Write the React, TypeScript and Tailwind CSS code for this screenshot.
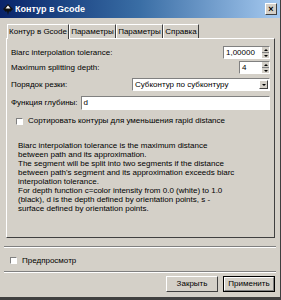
import React from "react";

const font = { fontFamily: '"Liberation Sans", Arial, sans-serif' };

function Spin({ value, w }: { value: string; w: string }) {
  return (
    <div className={`flex h-[13px] ${w} border border-t-[#808080] border-l-[#808080] border-b-white border-r-white bg-white`}>
      <div className="flex-1 pl-[2px] text-[8px] leading-[11px] text-black">{value}</div>
      <div className="flex w-[7px] flex-col bg-[#d4d0c8]">
        <div className="flex flex-1 items-center justify-center border-b border-[#808080]">
          <div className="h-0 w-0 border-x-[2px] border-b-[2px] border-x-transparent border-b-black" />
        </div>
        <div className="flex flex-1 items-center justify-center">
          <div className="h-0 w-0 border-x-[2px] border-t-[2px] border-x-transparent border-t-black" />
        </div>
      </div>
    </div>
  );
}

function Check() {
  return <div className="h-[7px] w-[7px] border border-t-[#808080] border-l-[#808080] border-b-white border-r-white bg-white" />;
}

export default function App() {
  return (
    <div style={font} className="flex h-[300px] w-[281px] flex-col border-b-[3px] border-r-[1px] border-b-[#404040] border-r-[#404040] bg-[#d4d0c8] text-black">
      {/* Title bar */}
      <div className="flex h-[18px] shrink-0 items-center bg-gradient-to-r from-[#0a246a] via-[#3a6ea5] to-[#a6caf0] pl-[3px] pr-[3px]">
        <svg width="10" height="11" viewBox="0 0 10 11" className="shrink-0">
          <path d="M5 0 L10 5 L7 8 L6 7 L5 11 L4 7 L3 8 L0 5 Z" fill="#111" />
          <path d="M5 1.5 L7.5 4.5 L2.5 4.5 Z" fill="#fff" />
        </svg>
        <div className="ml-[2px] text-[9px] font-bold leading-none text-white">Контур в Gcode</div>
        <div className="ml-auto flex h-[12px] w-[12px] items-center justify-center border border-t-white border-l-white border-b-[#404040] border-r-[#404040] bg-[#d4d0c8] text-[9px] font-bold leading-none">
          ×
        </div>
      </div>

      {/* Tabs */}
      <div className="mt-[5px] flex h-[15px] shrink-0 items-end pl-[7px] text-[8px] leading-none">
        <div className="relative z-10 flex h-[15px] w-[62px] items-center justify-center border-l border-t border-r border-l-white border-t-white border-r-[#404040] bg-[#d4d0c8] -mb-px pb-[1px]">
          Контур в Gcode
        </div>
        <div className="flex h-[14px] w-[47px] items-center justify-center border-l border-t border-r border-l-white border-t-white border-r-[#404040]">Параметры</div>
        <div className="flex h-[14px] w-[47px] items-center justify-center border-l border-t border-r border-l-white border-t-white border-r-[#404040]">Параметры</div>
        <div className="flex h-[14px] w-[36px] items-center justify-center border-l border-t border-r border-l-white border-t-white border-r-[#404040]">Справка</div>
      </div>

      {/* Panel */}
      <div className="ml-[6px] mr-[5px] flex h-[200px] shrink-0 flex-col border border-t-white border-l-white border-b-[#404040] border-r-[#404040] pl-[4px] pr-[4px] pt-[7px] text-[8px]">
        <div className="flex h-[13px] items-center justify-between">
          <span>Biarc interpolation tolerance:</span>
          <Spin value="1,00000" w="w-[47px]" />
        </div>
        <div className="mt-[2px] flex h-[13px] items-center justify-between">
          <span>Maximum splitting depth:</span>
          <Spin value="4" w="w-[31px]" />
        </div>
        <div className="mt-[4px] flex h-[13px] items-center justify-between">
          <span>Порядок резки:</span>
          <div className="flex h-[13px] w-[138px] items-center border border-t-[#808080] border-l-[#808080] border-b-white border-r-white bg-white">
            <span className="flex-1 pl-[2px] text-[8px] leading-none">Субконтур по субконтуру</span>
            <div className="mr-px flex h-[9px] w-[9px] items-center justify-center border border-t-white border-l-white border-b-[#404040] border-r-[#404040] bg-[#d4d0c8]">
              <div className="h-0 w-0 border-x-[2px] border-t-[2px] border-x-transparent border-t-black" />
            </div>
          </div>
        </div>
        <div className="mt-[5px] flex h-[14px] items-center">
          <span>Функция глубины:</span>
          <div className="ml-[3px] flex h-[14px] flex-1 items-center border border-t-[#808080] border-l-[#808080] border-b-white border-r-white bg-white pl-[2px] leading-none">
            d
          </div>
        </div>
        <div className="mt-[7px] flex h-[8px] items-center pl-[5px]">
          <Check />
          <span className="ml-[5px]">Сортировать контуры для уменьшения rapid distance</span>
        </div>
        <div className="mt-[16px] pl-[7px] text-[8px] leading-[9px]">
          Biarc interpolation tolerance is the maximum distance
          <br />
          between path and its approximation.
          <br />
          The segment will be split into two segments if the distance
          <br />
          between path's segment and its approximation exceeds biarc
          <br />
          interpolation tolerance.
          <br />
          For depth function c=color intensity from 0.0 (white) to 1.0
          <br />
          (black), d is the depth defined by orientation points, s -
          <br />
          surface defined by orientation points.
        </div>
      </div>

      {/* Separator */}
      <div className="mx-[4px] mt-[8px] h-[2px] shrink-0 border-t border-b border-t-[#808080] border-b-white" />

      <div className="mt-[8px] flex h-[9px] shrink-0 items-center pl-[10px] text-[8px]">
        <Check />
        <span className="ml-[5px]">Предпросмотр</span>
      </div>

      <div className="mx-[4px] mt-[6px] h-[2px] shrink-0 border-t border-b border-t-[#808080] border-b-white" />

      <div className="mt-[3px] flex shrink-0 justify-end pr-[5px] text-[8px]">
        <div className="flex h-[16px] w-[52px] items-center justify-center border border-t-white border-l-white border-b-[#404040] border-r-[#404040]">
          Закрыть
        </div>
        <div className="ml-[5px] flex h-[16px] w-[52px] items-center justify-center border border-black">
          <div className="flex h-full w-full items-center justify-center border border-t-white border-l-white border-b-[#808080] border-r-[#808080]">
            Применить
          </div>
        </div>
      </div>
    </div>
  );
}
